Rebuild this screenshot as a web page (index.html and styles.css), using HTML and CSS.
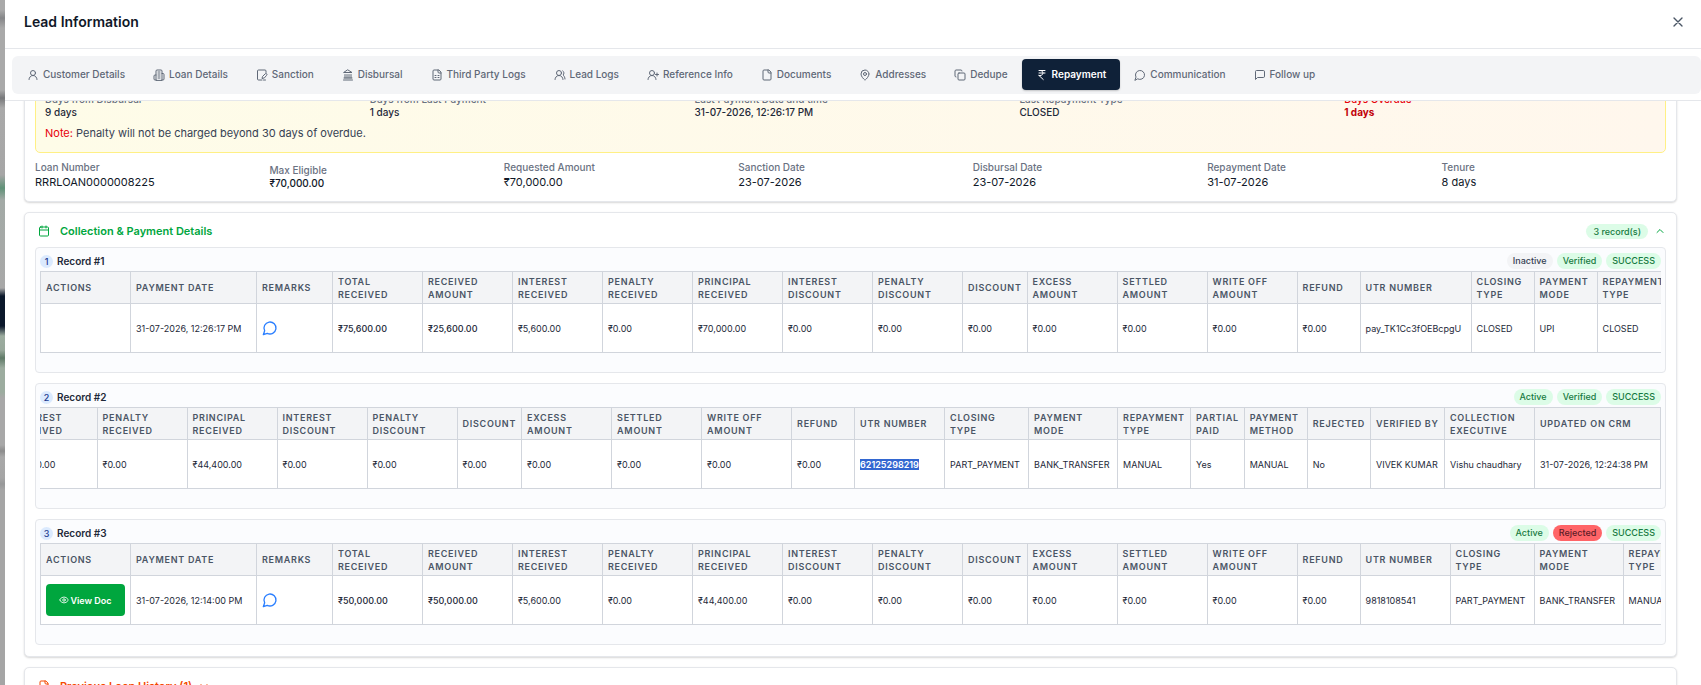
FILE: index.html
```html
<!DOCTYPE html>
<html lang="en">
<head>
  <meta charset="utf-8">
  <title>Lead Information</title>
  <link rel="stylesheet" href="styles.css">
</head>
<body>
  <svg class="sprite" aria-hidden="true">
    <symbol id="i-user" viewBox="0 0 24 24"><circle cx="12" cy="8" r="5"/><path d="M20 21a8 8 0 0 0-16 0"/></symbol>
    <symbol id="i-building" viewBox="0 0 24 24"><path d="M6 22V4a2 2 0 0 1 2-2h8a2 2 0 0 1 2 2v18Z"/><path d="M6 12H4a2 2 0 0 0-2 2v6a2 2 0 0 0 2 2h2"/><path d="M18 9h2a2 2 0 0 1 2 2v9a2 2 0 0 1-2 2h-2"/><path d="M10 6h4M10 10h4M10 14h4M10 18h4"/></symbol>
    <symbol id="i-file-pen" viewBox="0 0 24 24"><path d="M20 7V4a2 2 0 0 0-2-2H5a2 2 0 0 0-2 2v16a2 2 0 0 0 2 2h7"/><path d="M15 22h4"/><path d="M21.400 12.600a2 2 0 0 0-3-3L13 15l-1 4 4-1z"/></symbol>
    <symbol id="i-landmark" viewBox="0 0 24 24"><path d="M3 22h18M6 18v-7M10 18v-7M14 18v-7M18 18v-7M4 18h16M12 2l8 5H4z"/></symbol>
    <symbol id="i-sheet" viewBox="0 0 24 24"><path d="M15 2H6a2 2 0 0 0-2 2v16a2 2 0 0 0 2 2h12a2 2 0 0 0 2-2V7Z"/><path d="M14 2v4a2 2 0 0 0 2 2h4M8 13h2M14 13h2M8 17h2M14 17h2"/></symbol>
    <symbol id="i-users" viewBox="0 0 24 24"><path d="M18 21a8 8 0 0 0-16 0"/><circle cx="10" cy="8" r="5"/><path d="M22 20c0-3.400-2-6.500-4-8a5 5 0 0 0-.5-8.300"/></symbol>
    <symbol id="i-user-plus" viewBox="0 0 24 24"><path d="M2 21a8 8 0 0 1 16 0"/><circle cx="10" cy="8" r="5"/><path d="M20 8v6M23 11h-6"/></symbol>
    <symbol id="i-file" viewBox="0 0 24 24"><path d="M15 2H6a2 2 0 0 0-2 2v16a2 2 0 0 0 2 2h12a2 2 0 0 0 2-2V7Z"/><path d="M14 2v4a2 2 0 0 0 2 2h4"/></symbol>
    <symbol id="i-pin" viewBox="0 0 24 24"><path d="M20 10c0 5-5.500 10.200-7.400 11.800a1 1 0 0 1-1.200 0C9.500 20.200 4 15 4 10a8 8 0 0 1 16 0"/><circle cx="12" cy="10" r="3"/></symbol>
    <symbol id="i-copy" viewBox="0 0 24 24"><rect width="14" height="14" x="8" y="8" rx="2"/><path d="M4 16c-1.100 0-2-.9-2-2V4c0-1.100.9-2 2-2h10c1.100 0 2 .9 2 2"/></symbol>
    <symbol id="i-rupee" viewBox="0 0 24 24"><path d="M6 3h12M6 8h12M6 13l8.500 8M6 13h3M9 13c6.700 0 6.700-10 0-10"/></symbol>
    <symbol id="i-chat" viewBox="0 0 24 24"><path d="M7.900 20A9 9 0 1 0 4 16.100L2 22Z"/></symbol>
    <symbol id="i-note" viewBox="0 0 24 24"><path d="M21 15a2 2 0 0 1-2 2H7l-4 4V5a2 2 0 0 1 2-2h14a2 2 0 0 1 2 2z"/></symbol>
    <symbol id="i-calendar" viewBox="0 0 24 24"><path d="M8 2v4M16 2v4M3 10h18"/><rect width="18" height="18" x="3" y="4" rx="2"/></symbol>
    <symbol id="i-eye" viewBox="0 0 24 24"><path d="M2 12.300a1 1 0 0 1 0-.7 10.800 10.800 0 0 1 20 0 1 1 0 0 1 0 .7 10.800 10.800 0 0 1-20 0"/><circle cx="12" cy="12" r="3"/></symbol>
    <symbol id="i-up" viewBox="0 0 24 24"><path d="m18 15-6-6-6 6"/></symbol>
    <symbol id="i-down" viewBox="0 0 24 24"><path d="m6 9 6 6 6-6"/></symbol>
    <symbol id="i-close" viewBox="0 0 24 24"><path d="M18 6 6 18M6 6l12 12"/></symbol>
  </svg>

  <div class="backdrop"></div>
  <div class="panel">
    <header class="panel-header">
      <h1>Lead Information</h1>
      <button class="close" aria-label="Close"><svg class="icon"><use href="#i-close"/></svg></button>
    </header>

    <div class="tabs-wrap">
      <nav class="tabs">
        <button class="tab"><svg class="icon"><use href="#i-user"/></svg>Customer Details</button>
        <button class="tab"><svg class="icon"><use href="#i-building"/></svg>Loan Details</button>
        <button class="tab"><svg class="icon"><use href="#i-file-pen"/></svg>Sanction</button>
        <button class="tab"><svg class="icon"><use href="#i-landmark"/></svg>Disbursal</button>
        <button class="tab"><svg class="icon"><use href="#i-sheet"/></svg>Third Party Logs</button>
        <button class="tab"><svg class="icon"><use href="#i-users"/></svg>Lead Logs</button>
        <button class="tab"><svg class="icon"><use href="#i-user-plus"/></svg>Reference Info</button>
        <button class="tab"><svg class="icon"><use href="#i-file"/></svg>Documents</button>
        <button class="tab"><svg class="icon"><use href="#i-pin"/></svg>Addresses</button>
        <button class="tab"><svg class="icon"><use href="#i-copy"/></svg>Dedupe</button>
        <button class="tab active"><svg class="icon"><use href="#i-rupee"/></svg>Repayment</button>
        <button class="tab"><svg class="icon"><use href="#i-chat"/></svg>Communication</button>
        <button class="tab"><svg class="icon"><use href="#i-note"/></svg>Follow up</button>
      </nav>
    </div>

    <main class="content">
      <div class="cards">
        <section class="card">
          <div class="overdue">
            <dl class="overdue-grid">
              <div><dt>Days from Disbursal</dt><dd>9 days</dd></div>
              <div><dt>Days from Last Payment</dt><dd>1 days</dd></div>
              <div><dt>Last Payment Date and time</dt><dd>31-07-2026, 12:26:17 PM</dd></div>
              <div><dt>Last Repayment Type</dt><dd>CLOSED</dd></div>
              <div class="late"><dt>Days Overdue</dt><dd>1 days</dd></div>
            </dl>
            <p class="note"><span>Note:</span> Penalty will not be charged beyond 30 days of overdue.</p>
          </div>
          <dl class="loan-grid">
            <div><dt>Loan Number</dt><dd>RRRLOAN0000008225</dd></div>
            <div class="small"><dt>Max Eligible</dt><dd>₹70,000.00</dd></div>
            <div><dt>Requested Amount</dt><dd>₹70,000.00</dd></div>
            <div><dt>Sanction Date</dt><dd>23-07-2026</dd></div>
            <div><dt>Disbursal Date</dt><dd>23-07-2026</dd></div>
            <div><dt>Repayment Date</dt><dd>31-07-2026</dd></div>
            <div><dt>Tenure</dt><dd>8 days</dd></div>
          </dl>
        </section>

        <section class="card">
          <div class="card-title green">
            <svg class="icon"><use href="#i-calendar"/></svg>
            <h2>Collection &amp; Payment Details</h2>
            <span class="badge count">3 record(s)</span>
            <svg class="icon chevron"><use href="#i-up"/></svg>
          </div>

          <div class="records">
            <article class="record">
              <div class="record-head">
                <span class="num">1</span>
                <h3>Record #1</h3>
                <span class="badge grey">Inactive</span>
                <span class="badge">Verified</span>
                <span class="badge">SUCCESS</span>
              </div>
              <div class="scroller">
                <table>
                  <colgroup><col class="c-md"><col class="c-date"><col class="c-remark"><col class="c-md" span="7"><col class="c-disc"><col class="c-md" span="3"><col class="c-sm"><col class="c-utr"><col class="c-sm" span="2"><col class="c-repay"></colgroup>
                  <thead>
                    <tr>
                      <th>Actions</th>
                      <th>Payment Date</th>
                      <th>Remarks</th>
                      <th>Total<br>Received</th>
                      <th>Received<br>Amount</th>
                      <th>Interest<br>Received</th>
                      <th>Penalty<br>Received</th>
                      <th>Principal<br>Received</th>
                      <th>Interest<br>Discount</th>
                      <th>Penalty<br>Discount</th>
                      <th>Discount</th>
                      <th>Excess<br>Amount</th>
                      <th>Settled<br>Amount</th>
                      <th>Write Off<br>Amount</th>
                      <th>Refund</th>
                      <th>UTR Number</th>
                      <th>Closing<br>Type</th>
                      <th>Payment<br>Mode</th>
                      <th>Repayment<br>Type</th>
                    </tr>
                  </thead>
                  <tbody>
                    <tr>
                      <td></td>
                      <td>31-07-2026, 12:26:17 PM</td>
                      <td><button class="remark" aria-label="Remarks"><svg class="icon"><use href="#i-chat"/></svg></button></td>
                      <td class="strong">₹75,600.00</td>
                      <td class="strong">₹25,600.00</td>
                      <td>₹5,600.00</td>
                      <td>₹0.00</td>
                      <td>₹70,000.00</td>
                      <td>₹0.00</td>
                      <td>₹0.00</td>
                      <td>₹0.00</td>
                      <td>₹0.00</td>
                      <td>₹0.00</td>
                      <td>₹0.00</td>
                      <td>₹0.00</td>
                      <td>pay_TK1Cc3fOEBcpgU</td>
                      <td>CLOSED</td>
                      <td>UPI</td>
                      <td>CLOSED</td>
                    </tr>
                  </tbody>
                </table>
              </div>
            </article>

            <article class="record">
              <div class="record-head">
                <span class="num">2</span>
                <h3>Record #2</h3>
                <span class="badge">Active</span>
                <span class="badge">Verified</span>
                <span class="badge">SUCCESS</span>
              </div>
              <div class="scroller at-end">
                <table>
                  <colgroup><col class="c-md" span="5"><col class="c-disc"><col class="c-md" span="3"><col class="c-sm"><col class="c-md"><col class="c-close"><col class="c-mode"><col class="c-type"><col class="c-partial"><col class="c-sm" span="2"><col class="c-verify"><col class="c-md"><col class="c-date"></colgroup>
                  <thead>
                    <tr>
                      <th>Interest<br>Received</th>
                      <th>Penalty<br>Received</th>
                      <th>Principal<br>Received</th>
                      <th>Interest<br>Discount</th>
                      <th>Penalty<br>Discount</th>
                      <th>Discount</th>
                      <th>Excess<br>Amount</th>
                      <th>Settled<br>Amount</th>
                      <th>Write Off<br>Amount</th>
                      <th>Refund</th>
                      <th>UTR Number</th>
                      <th>Closing<br>Type</th>
                      <th>Payment<br>Mode</th>
                      <th>Repayment<br>Type</th>
                      <th>Partial<br>Paid</th>
                      <th>Payment<br>Method</th>
                      <th>Rejected</th>
                      <th>Verified By</th>
                      <th>Collection<br>Executive</th>
                      <th>Updated On CRM</th>
                    </tr>
                  </thead>
                  <tbody>
                    <tr>
                      <td>₹5,600.00</td>
                      <td>₹0.00</td>
                      <td>₹44,400.00</td>
                      <td>₹0.00</td>
                      <td>₹0.00</td>
                      <td>₹0.00</td>
                      <td>₹0.00</td>
                      <td>₹0.00</td>
                      <td>₹0.00</td>
                      <td>₹0.00</td>
                      <td><mark>62125298219</mark></td>
                      <td>PART_PAYMENT</td>
                      <td>BANK_TRANSFER</td>
                      <td>MANUAL</td>
                      <td>Yes</td>
                      <td>MANUAL</td>
                      <td>No</td>
                      <td>VIVEK KUMAR</td>
                      <td>Vishu chaudhary</td>
                      <td>31-07-2026, 12:24:38 PM</td>
                    </tr>
                  </tbody>
                </table>
              </div>
            </article>

            <article class="record">
              <div class="record-head">
                <span class="num">3</span>
                <h3>Record #3</h3>
                <span class="badge">Active</span>
                <span class="badge red">Rejected</span>
                <span class="badge">SUCCESS</span>
              </div>
              <div class="scroller">
                <table>
                  <colgroup><col class="c-md"><col class="c-date"><col class="c-remark"><col class="c-md" span="7"><col class="c-disc"><col class="c-md" span="3"><col class="c-sm"><col class="c-md"><col class="c-close"><col class="c-mode"><col class="c-repay"></colgroup>
                  <thead>
                    <tr>
                      <th>Actions</th>
                      <th>Payment Date</th>
                      <th>Remarks</th>
                      <th>Total<br>Received</th>
                      <th>Received<br>Amount</th>
                      <th>Interest<br>Received</th>
                      <th>Penalty<br>Received</th>
                      <th>Principal<br>Received</th>
                      <th>Interest<br>Discount</th>
                      <th>Penalty<br>Discount</th>
                      <th>Discount</th>
                      <th>Excess<br>Amount</th>
                      <th>Settled<br>Amount</th>
                      <th>Write Off<br>Amount</th>
                      <th>Refund</th>
                      <th>UTR Number</th>
                      <th>Closing<br>Type</th>
                      <th>Payment<br>Mode</th>
                      <th>Repayment<br>Type</th>
                    </tr>
                  </thead>
                  <tbody>
                    <tr>
                      <td><button class="view-doc"><svg class="icon"><use href="#i-eye"/></svg>View Doc</button></td>
                      <td>31-07-2026, 12:14:00 PM</td>
                      <td><button class="remark" aria-label="Remarks"><svg class="icon"><use href="#i-chat"/></svg></button></td>
                      <td class="strong">₹50,000.00</td>
                      <td class="strong">₹50,000.00</td>
                      <td>₹5,600.00</td>
                      <td>₹0.00</td>
                      <td>₹44,400.00</td>
                      <td>₹0.00</td>
                      <td>₹0.00</td>
                      <td>₹0.00</td>
                      <td>₹0.00</td>
                      <td>₹0.00</td>
                      <td>₹0.00</td>
                      <td>₹0.00</td>
                      <td>9818108541</td>
                      <td>PART_PAYMENT</td>
                      <td>BANK_TRANSFER</td>
                      <td>MANUAL</td>
                    </tr>
                  </tbody>
                </table>
              </div>
            </article>
          </div>
        </section>

        <section class="card">
          <div class="card-title orange">
            <svg class="icon"><use href="#i-file"/></svg>
            <h2>Previous Loan History (1)</h2>
            <svg class="icon chevron"><use href="#i-down"/></svg>
          </div>
        </section>
      </div>
    </main>
  </div>
</body>
</html>
```
FILE: styles.css
```css
* {
  box-sizing: border-box;
}

body {
  display: flex;
  height: 100vh;
  margin: 0;
  overflow: hidden;
  font-family: Inter, "Liberation Sans", sans-serif;
  font-size: 10px;
  line-height: 13px;
  color: #1e2939;
  background: #fff;
}

h1, h2, h3, p, dl, dd {
  margin: 0;
}

button {
  padding: 0;
  border: 0;
  background: none;
  font: inherit;
  color: inherit;
  cursor: pointer;
}

.sprite {
  display: none;
}

.icon {
  flex: none;
  width: 12px;
  height: 12px;
  fill: none;
  stroke: currentColor;
  stroke-width: 2;
  stroke-linecap: round;
  stroke-linejoin: round;
}

/* dimmed page that shows beside the panel */
.backdrop {
  flex: none;
  width: 5px;
  background: linear-gradient(#a9a9a9 0, #a9a9a9 10px, #858688 18px, #a9a9a9 28px, #a9a9a9 90px, #77787a 98px, #a9a9a9 108px, #a6a6a6 175px, #5f9177 188px, #a3aaa6 200px, #a8a8a8 288px, #0b182b 296px, #0b182b 326px, #9cac9f 336px, #98a89b 350px, #5f7a67 358px, #9cac9f 368px, #9cac9f 392px, #a8a8a8 398px, #a8a8a8 445px, #8c8c8c 451px, #a8a8a8 457px, #a5a5a5 478px, #979899 484px, #a5a5a5 490px);
}

.panel {
  display: flex;
  flex: 1;
  flex-direction: column;
  min-width: 0;
  background: #fff;
}

.panel-header {
  display: flex;
  flex: none;
  align-items: center;
  justify-content: space-between;
  padding: 12px 15px 16px 19px;
  border-bottom: 1px solid #e5e7eb;
}

.panel-header h1 {
  font-size: 14px;
  font-weight: 600;
  line-height: 20px;
  color: #101828;
}

.close {
  display: flex;
  color: #4a5565;
}

.close .icon {
  width: 16px;
  height: 16px;
}

/* tabs */

.tabs-wrap {
  flex: none;
  padding: 7px 0 6px 7px;
  border-bottom: 1px solid #e5e7eb;
}

.tabs {
  display: flex;
  padding: 3px 1px 4px;
  border-radius: 6px;
  background: #f3f4f6;
}

.tab {
  display: flex;
  align-items: center;
  gap: 4px;
  height: 31px;
  padding: 0 14px;
  border-radius: 4px;
  font-weight: 500;
  color: #5f6877;
  white-space: nowrap;
}

.tab.active {
  font-weight: 600;
  color: #fff;
  background: #0f2138;
  box-shadow: 0 1px 2px rgba(0, 0, 0, 0.2);
}

/* cards */

.content {
  flex: 1;
  min-height: 0;
  overflow: hidden;
}

.cards {
  display: flex;
  flex-direction: column;
  gap: 10px;
  margin-top: -28px;
  padding: 0 24px 0 19px;
}

.card {
  padding: 0 10px 11px;
  border: 1px solid #e5e7eb;
  border-radius: 5px;
  background: #fff;
  box-shadow: 0 1px 2px rgba(0, 0, 0, 0.16);
}

.overdue {
  margin-top: 9px;
  padding: 9px 9px 10px;
  border: 1px solid #fff085;
  border-radius: 5px;
  background: linear-gradient(to right, #fefce8, #fff7ed);
}

.overdue-grid {
  display: grid;
  grid-template-columns: repeat(5, 1fr);
  gap: 13px;
}

dt {
  font-weight: 500;
  color: #6a7282;
}

.overdue-grid dd {
  font-weight: 500;
}

.overdue-grid .late dt {
  color: #e7000b;
}

.overdue-grid .late dd {
  font-weight: 700;
  color: #c10007;
}

.note {
  margin-top: 5px;
  font-size: 11px;
  line-height: 18px;
  color: #364153;
}

.note span {
  color: #e7000b;
}

.loan-grid {
  display: grid;
  grid-template-columns: repeat(7, 1fr);
  gap: 10px;
  align-items: end;
  margin-top: 8px;
}

.loan-grid dd {
  font-size: 11px;
  line-height: 16px;
  color: #101828;
}

.loan-grid .small dd {
  font-size: 10px;
  font-weight: 500;
  line-height: 13px;
}

.card-title {
  display: flex;
  align-items: center;
  height: 34px;
  padding: 2px 0 0 3px;
}

.card-title h2 {
  margin-left: 10px;
  font-size: 11px;
  font-weight: 600;
  line-height: 16px;
}

.card-title .count {
  margin-left: auto;
  padding: 1px 7px;
}

.chevron {
  margin-left: 6px;
}

.green {
  color: #00a63e;
}

.orange {
  color: #f54900;
}

/* records */

.records {
  display: flex;
  flex-direction: column;
  gap: 10px;
}

.record {
  height: 126px;
  padding: 5px 4px 0;
  border: 1px solid #e5e7eb;
  border-radius: 4px;
  background: #fbfcfe;
}

.record-head {
  display: flex;
  align-items: center;
  gap: 4px;
  height: 16px;
  margin-bottom: 2px;
}

.num {
  width: 13px;
  border-radius: 7px;
  font-size: 9px;
  font-weight: 500;
  text-align: center;
  color: #1c398e;
  background: #dbeafe;
}

.record-head h3 {
  margin-right: auto;
  font-size: 10px;
  font-weight: 600;
}

.badge {
  padding: 1px 6px 2px;
  border-radius: 8px;
  font-size: 9px;
  font-weight: 500;
  color: #177a41;
  background: #dcfce7;
}

.badge.grey {
  color: #364153;
  background: #f3f4f6;
}

.badge.red {
  color: #5c1d28;
  background: #ff6467;
}

.scroller {
  display: flex;
  overflow: hidden;
}

.scroller.at-end {
  justify-content: flex-end;
}

table {
  flex: none;
  border-collapse: collapse;
  background: #fff;
}

th, td {
  padding: 0 5px;
  border: 1px solid #d1d5dc;
  text-align: left;
  white-space: nowrap;
}

th {
  height: 32px;
  font-size: 9px;
  font-weight: 600;
  letter-spacing: 0.08em;
  text-transform: uppercase;
  color: #4a5565;
  background: #f3f4f6;
}

td {
  height: 49px;
  font-size: 9px;
}

.strong {
  font-weight: 500;
}

.c-md { width: 90px; }
.c-sm { width: 63px; }
.c-date { width: 126px; }
.c-remark { width: 76px; }
.c-disc { width: 64px; }
.c-utr { width: 111px; }
.c-close { width: 84px; }
.c-mode { width: 89px; }
.c-type { width: 73px; }
.c-partial { width: 53px; }
.c-verify { width: 74px; }
.c-repay { width: 80px; }

.remark {
  display: flex;
  color: #2b7fff;
}

.remark .icon {
  width: 16px;
  height: 16px;
}

.view-doc {
  display: flex;
  align-items: center;
  justify-content: center;
  gap: 1px;
  width: 100%;
  height: 32px;
  border-radius: 4px;
  font-weight: 600;
  color: #fff;
  background: #00a63e;
}

.view-doc .icon {
  width: 10px;
  height: 10px;
}

mark {
  font-weight: 600;
  color: #fff;
  background: #3367d1;
}
```
